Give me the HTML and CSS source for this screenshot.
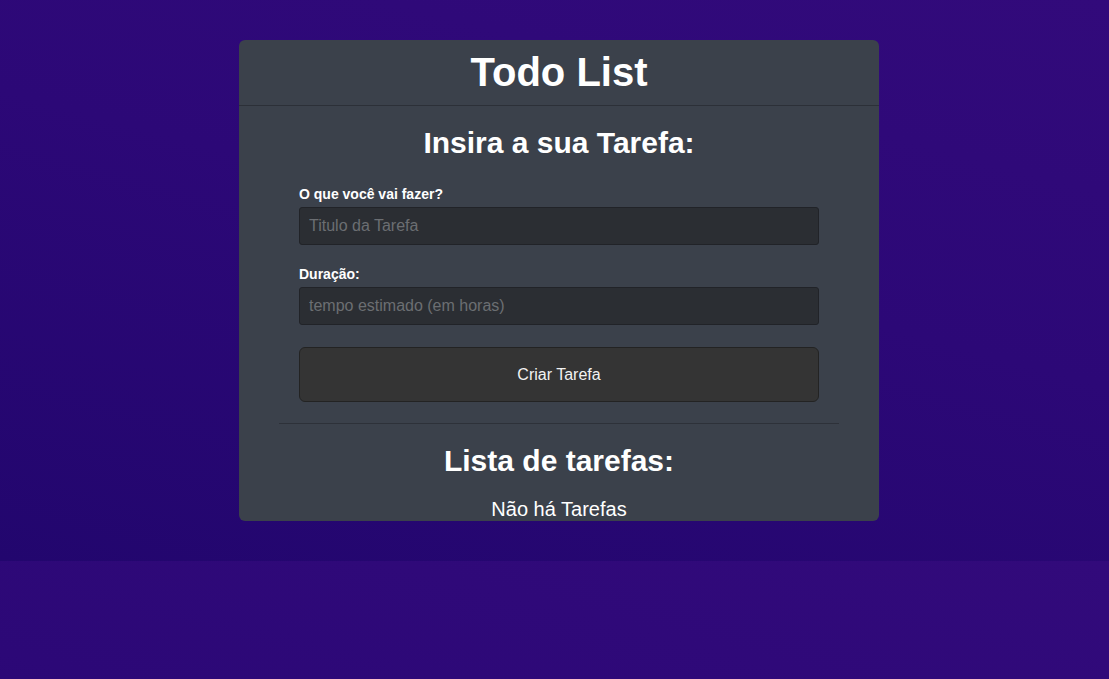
FILE: index.html
```html
<!DOCTYPE html>
<html lang="pt-BR">
<head>
<meta charset="utf-8">
<title>Todo List</title>
<link rel="stylesheet" href="styles.css">
</head>
<body>
  <main class="card">
    <header class="card-header">
      <h1 class="title">Todo List</h1>
    </header>
    <section class="card-body">
      <h2 class="section-title">Insira a sua Tarefa:</h2>
      <form class="task-form">
        <div class="field">
          <label class="field-label" for="titulo">O que você vai fazer?</label>
          <input class="field-input" id="titulo" type="text" placeholder="Titulo da Tarefa">
        </div>
        <div class="field field-last">
          <label class="field-label" for="duracao">Duração:</label>
          <input class="field-input" id="duracao" type="text" placeholder="tempo estimado (em horas)">
        </div>
        <button class="submit-btn" type="button">Criar Tarefa</button>
      </form>
      <h2 class="section-title list-title">Lista de tarefas:</h2>
      <p class="empty">Não há Tarefas</p>
    </section>
  </main>
</body>
</html>
```
FILE: styles.css
```css
* { box-sizing: border-box; }

body {
  margin: 0;
  padding: 40px 0 40px 9px;
  font-family: "Liberation Sans", Arial, sans-serif;
  color: #fff;
  background: linear-gradient(195deg, #320a7b 0%, #2c0877 45%, #22066e 100%);
}

.card {
  width: 640px;
  height: 481px;
  margin: 0 auto;
  background: #3b414b;
  border-radius: 6px;
  overflow: hidden;
}

.card-header {
  padding: 9px 0 10px;
  border-bottom: 1px solid #2c3038;
  text-align: center;
}

.title {
  margin: 0;
  font-size: 40px;
  line-height: 46px;
  font-weight: bold;
}

.card-body {
  padding: 20px 40px 0;
  text-align: center;
}

.section-title {
  margin: 0;
  font-size: 30px;
  line-height: 34px;
  font-weight: bold;
}

.task-form {
  padding: 26px 20px 21px;
  border-bottom: 1px solid #2d3139;
  text-align: left;
}

.field { margin-bottom: 21px; }
.field-last { margin-bottom: 22px; }

.field-label {
  display: block;
  font-size: 14px;
  line-height: 16px;
  font-weight: bold;
  margin-bottom: 5px;
}

.field-input {
  display: block;
  width: 100%;
  height: 38px;
  padding: 0 9px;
  background: #2b2e33;
  border: 1px solid #212328;
  border-radius: 3px;
  color: #fff;
  font-family: "Liberation Sans", Arial, sans-serif;
  font-size: 16px;
  outline: none;
}

.field-input::placeholder { color: #6b6e72; }

.submit-btn {
  display: block;
  width: 100%;
  height: 55px;
  background: #343434;
  border: 1px solid #232323;
  border-radius: 6px;
  color: #f2f2f2;
  font-family: "Liberation Sans", Arial, sans-serif;
  font-size: 16px;
}

.list-title { margin-top: 20px; }

.empty {
  margin: 20px 0 0;
  font-size: 20px;
  line-height: 23px;
}
```
